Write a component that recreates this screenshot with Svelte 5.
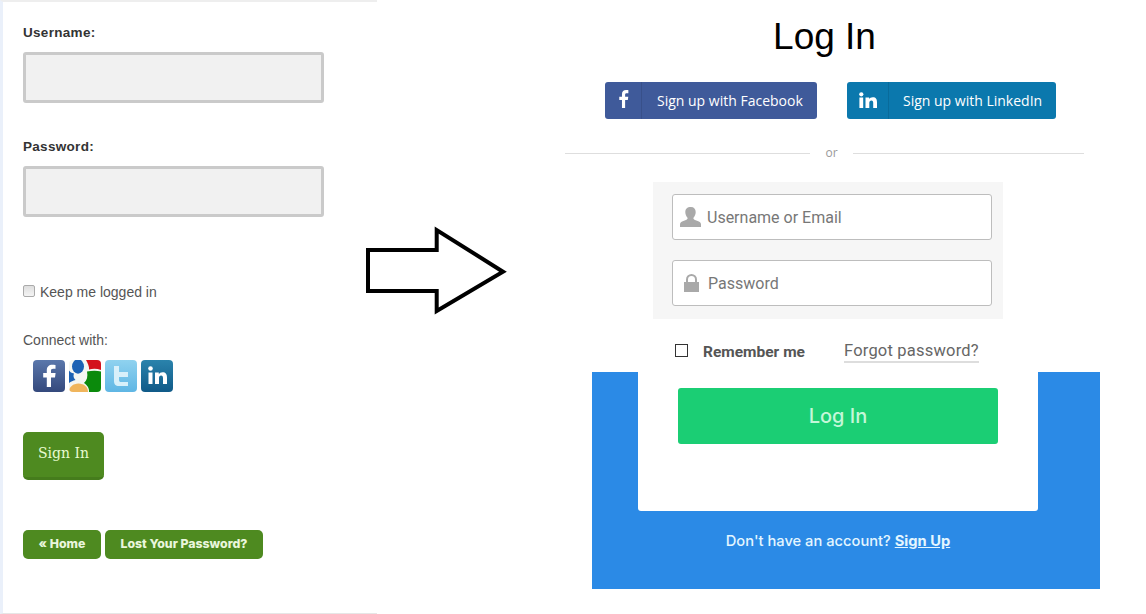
<script lang="ts">
  // Two login forms side by side: the old one on the left, the redesign on the right.
  let keepLogged = $state(false);
  let remember = $state(false);
</script>

<div class="stage">
  <section class="old">
    <label class="field-label" for="old-user">Username:</label>
    <input id="old-user" class="old-input" type="text" />
    <label class="field-label second" for="old-pass">Password:</label>
    <input id="old-pass" class="old-input" type="password" />

    <label class="keep">
      <input type="checkbox" bind:checked={keepLogged} />
      <span>Keep me logged in</span>
    </label>

    <p class="connect">Connect with:</p>
    <div class="socials">
      <svg viewBox="0 0 32 32" width="32" height="32" aria-label="Facebook">
        <defs>
          <linearGradient id="fbg" x1="0" y1="0" x2="0" y2="1"><stop offset="0" stop-color="#5a77ab" /><stop offset="1" stop-color="#34497c" /></linearGradient>
          <linearGradient id="twg" x1="0" y1="0" x2="0" y2="1"><stop offset="0" stop-color="#8fd2ef" /><stop offset="1" stop-color="#5fb6e4" /></linearGradient>
          <linearGradient id="ing" x1="0" y1="0" x2="0" y2="1"><stop offset="0" stop-color="#2a83ac" /><stop offset="1" stop-color="#105a88" /></linearGradient>
        </defs>
        <rect width="32" height="32" rx="4" fill="url(#fbg)" />
        <path d="M18 27V17.500h4l.6-4.500H18v-2.300c0-1.300.4-2 2.100-2h2.400V5c-.6-.1-1.900-.2-3.300-.2-3.200 0-5.400 1.900-5.400 5.500V13h-3.600v4.500h3.600V27z" fill="#fff" />
      </svg>
      <svg viewBox="0 0 32 32" width="32" height="32" aria-label="Google">
        <clipPath id="gclip"><rect width="32" height="32" rx="4" /></clipPath>
        <g clip-path="url(#gclip)">
          <rect width="32" height="32" fill="#f4f6f2" />
          <path d="M17 0h15v10c-4-1.500-8-1.500-12-.5 .5-3-1.500-6.500-3-9.500z" fill="#d3121c" />
          <path d="M18 11.500c5-1 10-1 14 0V32H20c.5-4-2-7-5-9 3-2.500 4-6.500 3-11.500z" fill="#0b8a0c" />
          <ellipse cx="9" cy="6.500" rx="6" ry="7.200" fill="#1c62b4" />
          <path d="M0 10.500c1 1.500 2.500 2.500 5 3-1 2.500-.500 4.500 1.500 6.500-2.500.5-4.500 1.500-6.500 3z" fill="#1c62b4" />
          <path d="M0 32c0-5 4-8.500 9.500-8.500s9.500 3.500 9.500 8.500z" fill="#f0b55c" />
        </g>
      </svg>
      <svg viewBox="0 0 32 32" width="32" height="32" aria-label="Twitter">
        <rect width="32" height="32" rx="4" fill="url(#twg)" />
        <path d="M9 6h5v6h9v5h-9v3c0 1.500.8 2 2 2h7v4h-9c-3.500 0-5-2-5-5z" fill="#d8f0fa" />
      </svg>
      <svg viewBox="0 0 32 32" width="32" height="32" aria-label="LinkedIn">
        <rect width="32" height="32" rx="4" fill="url(#ing)" />
        <circle cx="9.500" cy="8.500" r="2.300" fill="#fff" />
        <path d="M7.500 12.500h4V24h-4zM14 12.500h3.800v1.700c.7-1.200 2-2 3.700-2 3.300 0 4.500 2 4.500 5.300V24h-4v-5.800c0-1.700-.5-2.700-1.900-2.700s-2.100 1-2.100 2.700V24h-4z" fill="#fff" />
      </svg>
    </div>

    <button class="sign-in" type="button">Sign In</button>

    <div class="old-links">
      <button class="small-btn home" type="button">« Home</button>
      <button class="small-btn lost" type="button">Lost Your Password?</button>
    </div>
  </section>

  <svg class="arrow" viewBox="0 0 144 90" width="144" height="90" aria-hidden="true">
    <path d="M4 24h68.700V4L139 45.700 72.700 85V65H4z" fill="#fff" stroke="#000" stroke-width="4" stroke-linejoin="miter" />
  </svg>

  <section class="new">
    <h1>Log In</h1>
    <div class="oauth">
      <button class="oauth-btn fb" type="button">
        <span class="oauth-icon">
          <svg viewBox="0 0 12 20" width="11" height="18" aria-hidden="true"><path d="M7.800 20v-9h3l.5-3.600H7.800V5.200c0-1 .3-1.700 1.800-1.700h1.800V.3C11.100.2 10 .100 8.800.100 6.200.1 4.300 1.700 4.300 4.700v2.700H1.300V11h3v9z" fill="#fff" /></svg>
        </span>
        <span class="oauth-text">Sign up with Facebook</span>
      </button>
      <button class="oauth-btn li" type="button">
        <span class="oauth-icon">
          <svg viewBox="0 0 18 16" width="18" height="16" aria-hidden="true"><circle cx="2.300" cy="2.300" r="2.100" fill="#fff" /><path d="M.4 5.500h3.800V16H.4zM6.500 5.500h3.600V7c.6-1 1.900-1.800 3.700-1.800 3.300 0 4.200 2 4.200 5V16h-3.800v-5.100c0-1.500-.4-2.500-1.800-2.500s-2.100 1-2.100 2.500V16H6.500z" fill="#fff" /></svg>
        </span>
        <span class="oauth-text">Sign up with LinkedIn</span>
      </button>
    </div>

    <div class="or"><span>or</span></div>

    <div class="fields">
      <label class="new-input">
        <svg viewBox="0 0 22 20" width="22" height="20" aria-hidden="true"><path d="M11 0c3 0 4.700 2 4.700 5 0 2.300-1 4.600-2.400 6 .2 1.200 1 1.700 3 2.400 3 1 4.700 1.800 4.700 4V20H0v-2.600c0-2.200 1.700-3 4.700-4 2-.7 2.800-1.200 3-2.400-1.400-1.400-2.400-3.700-2.400-6 0-3 1.700-5 5.700-5z" fill="#a9a9a9" /></svg>
        <input type="text" placeholder="Username or Email" />
      </label>
      <label class="new-input">
        <svg class="lock" viewBox="0 0 15 18" width="15" height="18" aria-hidden="true"><path d="M0 8h15v10H0z" fill="#a9a9a9" /><path d="M3 8.500V5.500a4.500 4.500 0 0 1 9 0v3" fill="none" stroke="#a9a9a9" stroke-width="2" /></svg>
        <input type="password" placeholder="Password" />
      </label>
    </div>

    <div class="remember">
      <label class="remember-check">
        <input type="checkbox" bind:checked={remember} />
        <span>Remember me</span>
      </label>
      <span class="forgot">Forgot password?</span>
    </div>

    <div class="blue">
      <div class="card">
        <button class="login" type="button">Log In</button>
      </div>
      <p class="signup">Don't have an account? <span class="signup-link">Sign Up</span></p>
    </div>
  </section>
</div>

<style>
  :global(body) {
    margin: 0;
    background: #fff;
  }
  .stage {
    position: relative;
    display: flex;
    width: 1146px;
    height: 614px;
    overflow: hidden;
    background: #fff;
    font-family: "Liberation Sans", Arial, sans-serif;
  }

  /* left: old form */
  .old {
    box-sizing: border-box;
    display: flex;
    flex-direction: column;
    align-items: flex-start;
    width: 377px;
    height: 614px;
    padding: 23px 0 0 20px;
    border-left: 3px solid #eaf0fa;
    border-top: 2px solid #eeeeee;
    border-bottom: 1px solid #e6e6e6;
  }
  .field-label {
    font-size: 13.500px;
    font-weight: 700;
    line-height: 15px;
    letter-spacing: 0.3px;
    color: #333;
  }
  .field-label.second {
    margin-top: 36px;
  }
  .old-input {
    box-sizing: border-box;
    width: 301px;
    height: 51px;
    margin: 12px 0 0;
    border: 3px solid #cacaca;
    border-radius: 3px;
    background: #f1f1f1;
  }
  .keep {
    display: flex;
    align-items: center;
    gap: 5px;
    margin-top: 67px;
    font-size: 14px;
    line-height: 16px;
    color: #555;
  }
  .keep input {
    appearance: none;
    box-sizing: border-box;
    width: 12px;
    height: 12px;
    margin: -3px 0 0;
    border: 1px solid #aaa;
    border-radius: 2px;
    background: linear-gradient(#dedede, #f4f4f4);
  }
  .connect {
    margin: 32px 0 0;
    font-size: 14px;
    line-height: 16px;
    color: #555;
  }
  .socials {
    display: flex;
    gap: 4px;
    margin: 12px 0 0 10px;
  }
  .sign-in {
    width: 81px;
    height: 48px;
    margin-top: 40px;
    padding: 0 0 3px;
    border: none;
    border-bottom: 3px solid #457c1c;
    border-radius: 5px;
    background: #4e8a20;
    color: #e8fad0;
    font-family: "DejaVu Serif", serif;
    font-size: 14px;
  }
  .old-links {
    display: flex;
    gap: 4px;
    margin-top: 50px;
  }
  .small-btn {
    height: 29px;
    padding: 0 0 2px;
    border: none;
    border-radius: 5px;
    background: #4e8a20;
    color: #e9f6dc;
    font-family: Inter, sans-serif;
    font-size: 12.300px;
    font-weight: 800;
  }
  .home {
    width: 78px;
  }
  .lost {
    width: 158px;
  }

  .arrow {
    position: absolute;
    left: 364px;
    top: 226px;
  }

  /* right: new form */
  .new {
    display: flex;
    flex-direction: column;
    width: 535px;
    margin-left: 188px;
  }
  h1 {
    width: 519px;
    margin: 15px 0 0;
    font-size: 37px;
    font-weight: 400;
    line-height: 44px;
    text-align: center;
    color: #000;
  }
  .oauth {
    display: flex;
    gap: 30px;
    margin: 23px 0 0 40px;
  }
  .oauth-btn {
    display: flex;
    align-items: stretch;
    height: 37px;
    padding: 0;
    border: none;
    border-radius: 3px;
    color: #fff;
    font-family: "Open Sans", sans-serif;
    font-size: 14px;
  }
  .oauth-btn.fb {
    width: 212px;
    background: #3f5a9a;
  }
  .oauth-btn.li {
    width: 209px;
    background: #0b78ad;
  }
  .oauth-icon {
    display: flex;
    align-items: center;
    justify-content: center;
    border-right: 1px solid rgba(0, 0, 0, 0.1);
  }
  .fb .oauth-icon {
    width: 36px;
    padding-bottom: 3px;
    box-sizing: content-box;
    height: 34px;
  }
  .li .oauth-icon {
    width: 41px;
    padding-bottom: 2px;
    height: 35px;
  }
  .oauth-text {
    align-self: center;
    white-space: nowrap;
  }
  .fb .oauth-text {
    margin-left: 15px;
  }
  .li .oauth-text {
    margin-left: 14px;
  }
  .or {
    width: 519px;
    height: 16px;
    margin-top: 26px;
    text-align: center;
    background: linear-gradient(#dedede, #dedede) 0 8px / 100% 1px no-repeat;
  }
  .or span {
    display: inline-block;
    vertical-align: top;
    box-sizing: border-box;
    width: 43px;
    margin-left: 14px;
    background: #fff;
    color: #999;
    font-family: "Open Sans", sans-serif;
    font-size: 12px;
    line-height: 16px;
  }
  .fields {
    display: flex;
    flex-direction: column;
    gap: 20px;
    box-sizing: border-box;
    width: 350px;
    height: 137px;
    margin: 21px 0 0 88px;
    padding: 12px 11px 0 19px;
    background: #f6f6f6;
  }
  .new-input {
    box-sizing: border-box;
    display: flex;
    align-items: center;
    height: 46px;
    padding-left: 7px;
    border: 1px solid #bdbdbd;
    border-radius: 3px;
    background: #fff;
  }
  .new-input svg {
    flex: none;
  }
  .new-input svg.lock {
    margin: 0 4px;
  }
  .new-input input {
    flex: 1;
    min-width: 0;
    margin-left: 5px;
    padding: 0;
    border: none;
    outline: none;
    background: transparent;
    font-family: Roboto, sans-serif;
    font-size: 16px;
  }
  .new-input input::placeholder {
    color: #777;
    opacity: 1;
  }
  .remember {
    display: flex;
    align-items: center;
    height: 53px;
    margin-left: 110px;
    box-sizing: border-box;
    padding-top: 13px;
  }
  .remember-check {
    display: flex;
    align-items: center;
    width: 169px;
    color: #555;
    font-family: Roboto, sans-serif;
    font-size: 15.500px;
    font-weight: 700;
  }
  .remember-check input {
    appearance: none;
    box-sizing: border-box;
    width: 13px;
    height: 13px;
    margin: -4px 15px 0 0;
    border: 1px solid #333;
    background: #fff;
  }
  .forgot {
    padding-bottom: 1px;
    border-bottom: 2px solid #dddddd;
    color: #666;
    font-family: Roboto, sans-serif;
    font-size: 16.500px;
    line-height: 18px;
    letter-spacing: 0.2px;
  }
  .blue {
    display: flex;
    flex-direction: column;
    box-sizing: border-box;
    width: 508px;
    height: 217px;
    margin-left: 27px;
    background: #2b8ae6;
  }
  .card {
    box-sizing: border-box;
    width: 400px;
    height: 139px;
    margin-left: 46px;
    padding: 16px 40px 0;
    border-radius: 0 0 3px 3px;
    background: #fff;
  }
  .login {
    width: 320px;
    height: 56px;
    padding: 0;
    border: none;
    border-radius: 3px;
    background: #1bce74;
    color: #c4f7d8;
    font-family: Inter, sans-serif;
    font-size: 20px;
    font-weight: 500;
  }
  .signup {
    margin: 20px 16px 0 0;
    text-align: center;
    color: #e4f6ff;
    font-family: Inter, sans-serif;
    font-size: 14.700px;
    font-weight: 500;
    line-height: 20px;
  }
  .signup-link {
    font-weight: 700;
    text-decoration: underline;
  }
</style>
